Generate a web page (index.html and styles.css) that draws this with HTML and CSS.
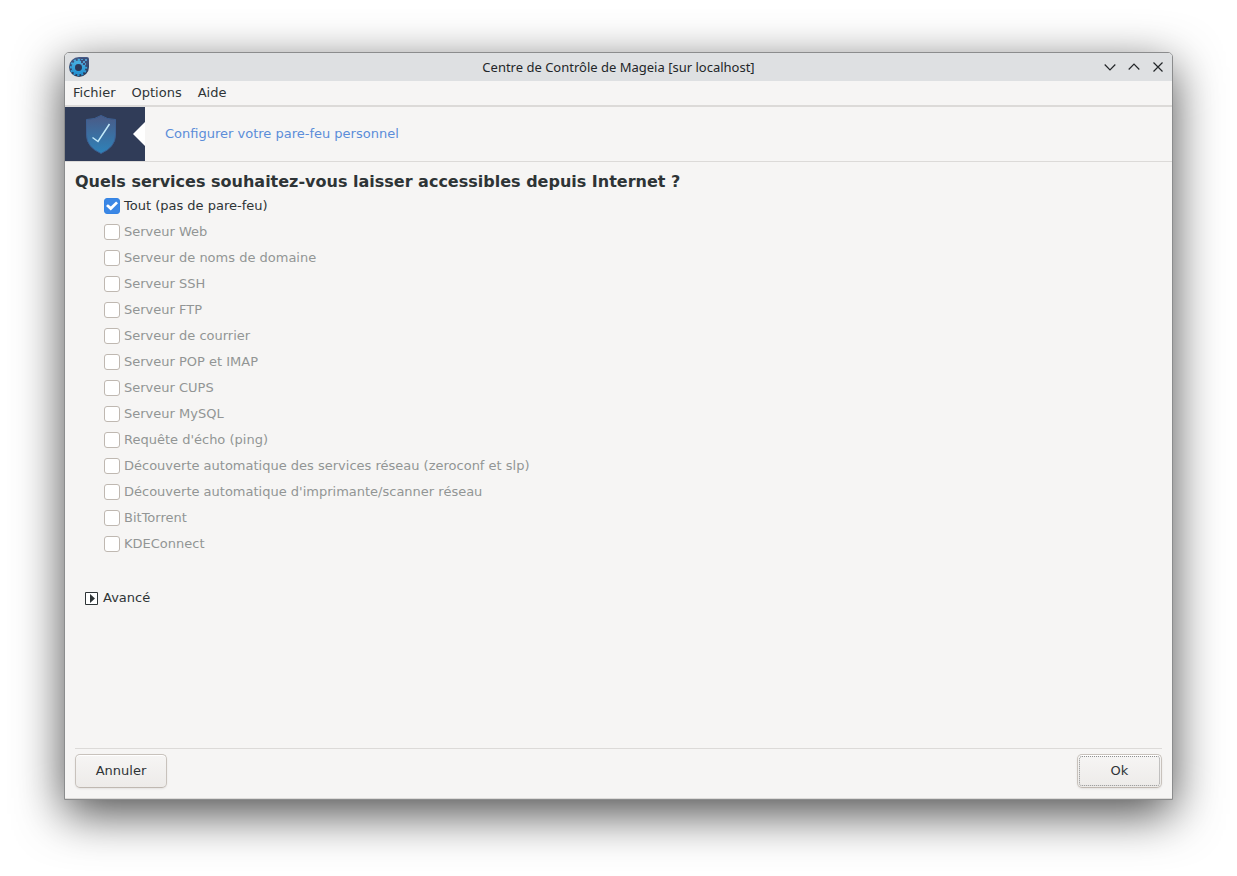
FILE: index.html
```html
<!DOCTYPE html>
<html lang="fr">
<head>
    <meta charset="UTF-8">
    <meta name="viewport" content="width=device-width, initial-scale=1.0">
    <title>Centre de Contrôle de Mageia</title>
    <link rel="stylesheet" href="styles.css">
</head>
<body>
    <div class="window">
        <header class="titlebar">
            <svg class="app-icon" viewBox="0 0 20 20">
                <defs>
                    <linearGradient id="drop" x1="0" y1="0" x2="0" y2="1">
                        <stop offset="0" stop-color="#465a88"/>
                        <stop offset="1" stop-color="#263450"/>
                    </linearGradient>
                    <linearGradient id="gear" x1="0" y1="0" x2="0" y2="1">
                        <stop offset="0" stop-color="#46aee0"/>
                        <stop offset="1" stop-color="#2594d4"/>
                    </linearGradient>
                </defs>
                <path d="M10 0H18Q20 0 20 2V10A10 10 0 1 1 10 0Z" fill="url(#drop)"/>
                <circle cx="9.5" cy="10.5" r="7.7" fill="none" stroke="url(#gear)" stroke-width="2" stroke-dasharray="2.2 1.83" stroke-dashoffset="-3"/>
                <circle cx="9.5" cy="10.5" r="5.2" fill="none" stroke="url(#gear)" stroke-width="3.6"/>
                <path d="M12 7.500V1H19V8H13.500Z" fill="#3c4e78"/>
                <circle cx="9.500" cy="10.500" r="3.300" fill="#2b3959"/>
                <path d="M12 6h2v2h-2zM14 4h2v2h-2zM12 2h2v1h-2zM16 2h2v2h-2zM16 6h1v2h-1z" fill="#4f9bce"/>
            </svg>
            <h1 class="title">Centre de Contrôle de Mageia [sur localhost]</h1>
            <div class="window-controls">
                <button type="button" aria-label="Réduire">
                    <svg viewBox="0 0 12 12"><path d="M.7 3.5L6 8.8L11.3 3.5"/></svg>
                </button>
                <button type="button" aria-label="Agrandir">
                    <svg viewBox="0 0 12 12"><path d="M.7 8.5L6 3.2L11.3 8.5"/></svg>
                </button>
                <button type="button" aria-label="Fermer">
                    <svg viewBox="0 0 12 12"><path d="M1.5 1.5L10.5 10.5M10.5 1.5L1.5 10.5"/></svg>
                </button>
            </div>
        </header>

        <nav class="menubar">
            <button type="button">Fichier</button>
            <button type="button">Options</button>
            <button type="button">Aide</button>
        </nav>

        <div class="banner">
            <div class="banner-icon">
                <svg class="shield" viewBox="0 0 30 39">
                    <defs>
                        <linearGradient id="shield" x1="0" y1="0" x2="0" y2="1">
                            <stop offset="0" stop-color="#4a5a86"/>
                            <stop offset="1" stop-color="#2e83ba"/>
                        </linearGradient>
                    </defs>
                    <path d="M15 .5Q21 4.5 29.5 4.5V20Q29.5 32 15 38.5Q.5 32 .5 20V4.5Q9 4.5 15 .5Z" fill="url(#shield)" stroke="#3c5f92"/>
                    <path d="M6.5 22.5L12 26.5L23.5 9" fill="none" stroke="#c4ebfa" stroke-width="1.5"/>
                </svg>
                <svg class="notch" viewBox="0 0 12 24"><path d="M12 0V24L0 12Z" fill="#fff"/></svg>
            </div>
            <p class="banner-text">Configurer votre pare-feu personnel</p>
        </div>

        <main class="content">
            <h2>Quels services souhaitez-vous laisser accessibles depuis Internet ?</h2>
            <div class="services">
                <label><input type="checkbox" checked>Tout (pas de pare-feu)</label>
                <label><input type="checkbox" disabled>Serveur Web</label>
                <label><input type="checkbox" disabled>Serveur de noms de domaine</label>
                <label><input type="checkbox" disabled>Serveur SSH</label>
                <label><input type="checkbox" disabled>Serveur FTP</label>
                <label><input type="checkbox" disabled>Serveur de courrier</label>
                <label><input type="checkbox" disabled>Serveur POP et IMAP</label>
                <label><input type="checkbox" disabled>Serveur CUPS</label>
                <label><input type="checkbox" disabled>Serveur MySQL</label>
                <label><input type="checkbox" disabled>Requête d'écho (ping)</label>
                <label><input type="checkbox" disabled>Découverte automatique des services réseau (zeroconf et slp)</label>
                <label><input type="checkbox" disabled>Découverte automatique d'imprimante/scanner réseau</label>
                <label><input type="checkbox" disabled>BitTorrent</label>
                <label><input type="checkbox" disabled>KDEConnect</label>
            </div>
            <button type="button" class="advanced">
                <svg viewBox="0 0 13 13">
                    <path d="M.5 .5H12.5V12.5H.5Z" fill="#fff" stroke="#2e3436"/>
                    <path d="M5 2V11L10 6.5Z" fill="#2e3436"/>
                </svg>
                Avancé
            </button>
        </main>

        <footer class="actions">
            <button type="button" class="btn btn-cancel">Annuler</button>
            <button type="button" class="btn btn-ok">Ok</button>
        </footer>
    </div>
</body>
</html>
```
FILE: styles.css
```css
* {
    box-sizing: border-box;
}
body {
    display: flex;
    min-height: 100vh;
    margin: 0;
    padding: 52px 64px 76px;
    background: #fff;
    color: #2e3436;
    font-family: "DejaVu Sans", sans-serif;
    font-size: 13px;
    line-height: 20px;
}
h1, h2, p {
    margin: 0;
}
button {
    padding: 0;
    border: none;
    background: none;
    color: inherit;
    font: inherit;
}
svg {
    display: block;
}
.window {
    flex: 1;
    display: flex;
    flex-direction: column;
    background: #f6f5f4;
    border: 1px solid #8b8c8d;
    border-radius: 5px 5px 0 0;
    box-shadow: inset 0 -1px #dcdad8, 0 14px 48px rgba(0, 0, 0, 0.7);
}

/* title bar */
.titlebar {
    display: grid;
    grid-template-columns: 1fr auto 1fr;
    align-items: center;
    height: 28px;
    padding: 0 4px;
    background: #dee0e2;
    border-radius: 4px 4px 0 0;
}
.app-icon {
    width: 20px;
    height: 20px;
}
.title {
    color: #232629;
    font-family: "Noto Sans", sans-serif;
    font-size: 13px;
    font-weight: normal;
}
.window-controls {
    display: flex;
    justify-content: flex-end;
    gap: 12px;
    padding-right: 4px;
}
.window-controls svg {
    width: 12px;
    height: 12px;
    fill: none;
    stroke: #232629;
    stroke-width: 1.2;
}

/* menu bar */
.menubar {
    display: flex;
    gap: 16px;
    height: 26px;
    padding: 0 8px;
    border-bottom: 2px solid #dcdad8;
}

/* page banner */
.banner {
    display: flex;
    align-items: center;
    gap: 20px;
    height: 55px;
    border-bottom: 1px solid #dcdad8;
}
.banner-icon {
    display: flex;
    align-items: center;
    justify-content: space-between;
    width: 80px;
    height: 54px;
    padding-left: 21px;
    background: #303c58;
}
.shield {
    width: 30px;
    height: 39px;
}
.notch {
    width: 12px;
    height: 24px;
}
.banner-text {
    color: #5b8dd9;
}

/* services */
.content {
    flex: 1;
    padding: 10px;
}
h2 {
    font-size: 16px;
}
.services {
    display: flex;
    flex-direction: column;
    align-items: flex-start;
    padding: 1px 0 0 29px;
}
.services label {
    display: flex;
    align-items: center;
    gap: 4px;
    height: 26px;
}
.services label:has(:disabled) {
    color: #929595;
}
.services input {
    appearance: none;
    width: 16px;
    height: 16px;
    margin: 0;
    background: #fff;
    border: 1px solid #bfb8b1;
    border-radius: 3px;
}
.services input:checked {
    display: grid;
    place-items: center;
    background: #3b87e5;
    border-color: #3584e4;
}
.services input:checked::before {
    content: "";
    width: 12px;
    height: 10px;
    background: #fff;
    clip-path: polygon(0 50%, 16% 32%, 40% 56%, 84% 5%, 100% 22%, 40% 94%);
}
.advanced {
    display: flex;
    align-items: center;
    gap: 5px;
    margin: 31px 0 0 10px;
}
.advanced svg {
    width: 13px;
    height: 13px;
}

/* bottom buttons */
.actions {
    display: flex;
    justify-content: space-between;
    margin: 0 10px;
    padding: 5px 0 11px;
    border-top: 1px solid #dcdad8;
}
.btn {
    height: 34px;
    background: linear-gradient(#f6f5f4, #edebe9);
    border: 1px solid #c8c2bc;
    border-bottom-color: #bfb8b1;
    border-radius: 5px;
    box-shadow: inset 0 1px #fff, 0 1px 2px rgba(0, 0, 0, 0.08);
}
.btn-cancel {
    min-width: 92px;
}
.btn-ok {
    min-width: 85px;
    outline: 1px dotted #8f9090;
    outline-offset: -3px;
}
```
